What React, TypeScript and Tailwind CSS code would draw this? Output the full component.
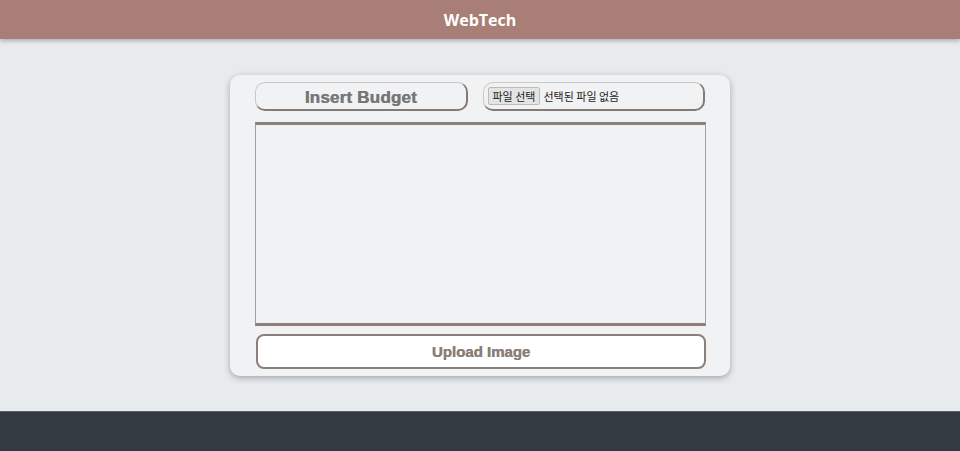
export default function App() {
  return (
    <div className="min-h-screen bg-[#e8ebee] flex flex-col font-['Liberation_Sans',Arial,sans-serif]">
      <header className="h-[39px] bg-[#a87e76] flex items-center justify-center shadow-[0_2px_4px_rgba(0,0,0,0.25)] relative z-10">
        <h1 className="text-white font-bold text-[16px] font-['Open_Sans',sans-serif]">WebTech</h1>
      </header>

      <main className="flex justify-center pt-[36px] pb-[35px]">
        <div className="w-[500px] bg-[#f1f2f3] rounded-[10px] shadow-[0_2px_6px_rgba(0,0,0,0.3)] px-[25px] pt-[7px] pb-[7px]">
          <div className="flex gap-[15px]">
            <button className="w-[213px] h-[29px] pt-[2px] rounded-[10px] bg-[#f1f2f3] border border-[#c8c8c8] border-b-2 border-r-2 border-b-[#857a74] border-r-[#857a74] text-[#777777] font-bold text-[17px] tracking-[0.2px] [text-shadow:0.5px_0_0_#777777]">
              Insert Budget
            </button>
            <div className="w-[223px] h-[29px] rounded-[10px] bg-[#f1f2f3] border border-[#c8c8c8] border-b-2 border-r-2 border-b-[#857a74] border-r-[#857a74] flex items-center pl-[4px] gap-[3px] text-[11px] font-['Noto_Sans_CJK_KR',sans-serif] text-[#222]">
              <span className="bg-[#e4e4e4] border border-[#bbbbbb] rounded-[2px] px-[4px] h-[18px] leading-[16px]">파일 선택</span>
              <span>선택된 파일 없음</span>
            </div>
          </div>

          <div className="mt-[11px] h-[204px] w-[451px] bg-[#f1f2f3] border border-[#a0a0a0] border-t-[3px] border-b-[3px] border-t-[#8d817b] border-b-[#8d817b]"></div>

          <button className="mt-[8px] ml-px w-[450px] h-[35px] pt-[2px] bg-white rounded-[8px] border-2 border-[#8c807a] text-[#8a7f78] font-bold text-[15px] [text-shadow:0.4px_0_0_#8a7f78]">
            Upload Image
          </button>
        </div>
      </main>

      <footer className="flex-1 min-h-[40px] bg-[#343a42] border-t border-[#5a6068]"></footer>
    </div>
  );
}
